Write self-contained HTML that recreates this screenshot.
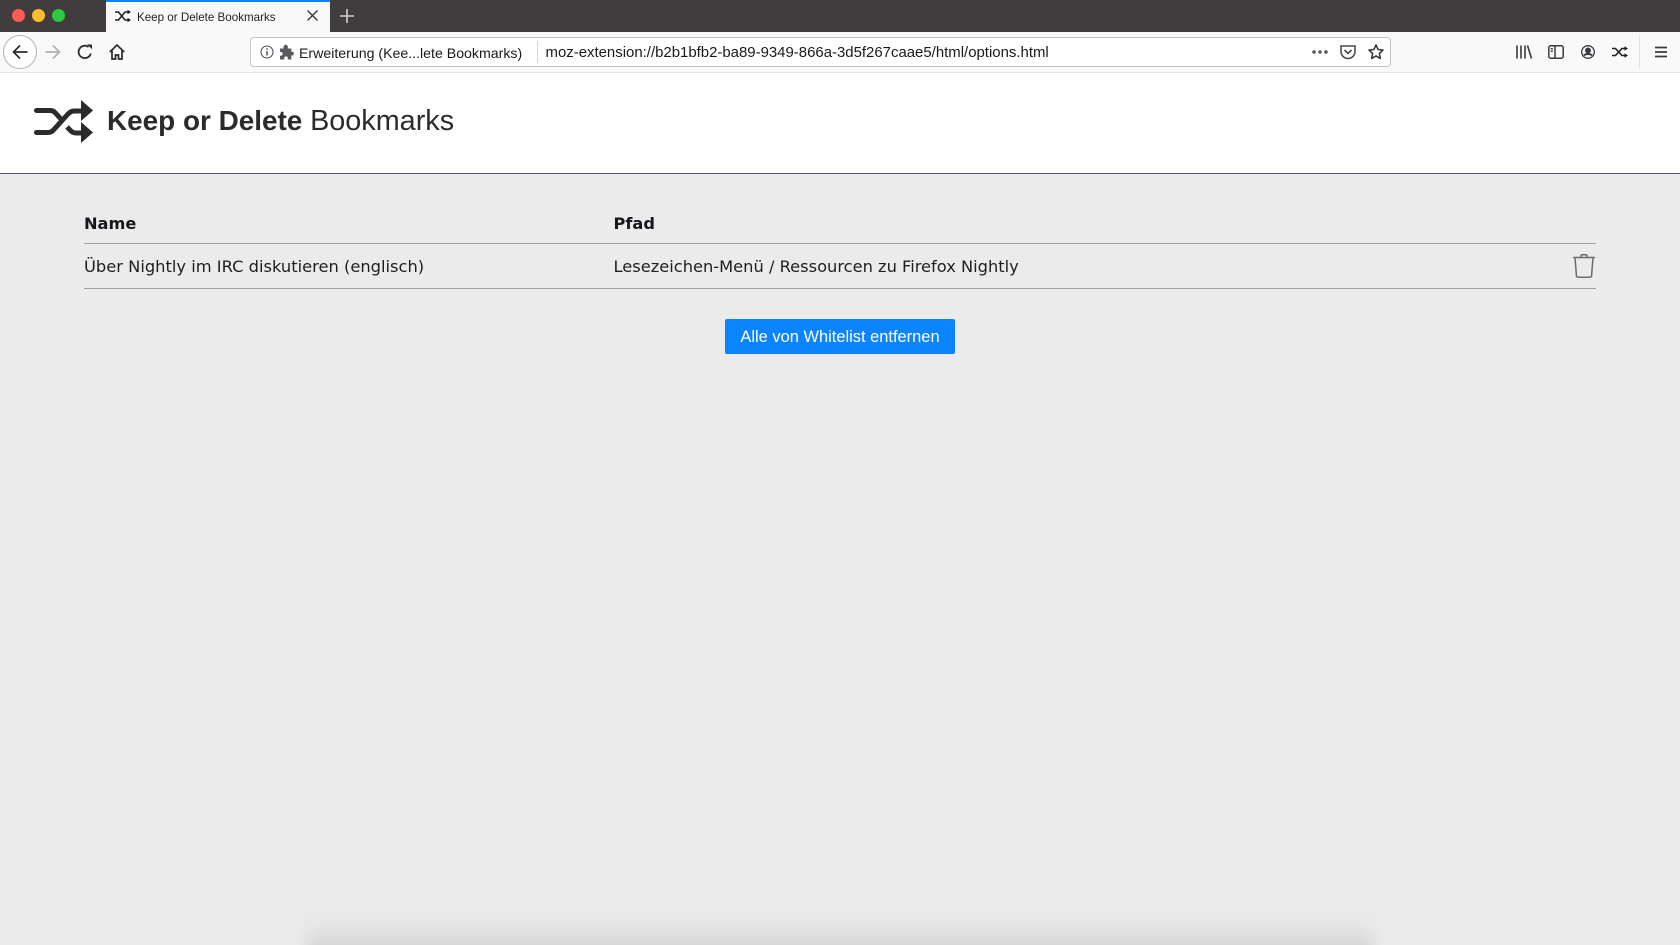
<!DOCTYPE html>
<html lang="de"><head><meta charset="utf-8"><title>Keep or Delete Bookmarks</title>
<style>
html,body{margin:0;padding:0;width:1680px;height:945px;overflow:hidden;background:#ebebeb;font-family:"Liberation Sans",sans-serif}
.a{position:absolute;white-space:nowrap}
svg.a{overflow:visible}
</style></head><body>
<div class="a" style="left:0;top:0;width:1680px;height:32px;background:#413c3e"></div>
<div class="a" style="left:12px;top:9px;width:13px;height:13px;border-radius:50%;background:#fc5b57"></div>
<div class="a" style="left:32px;top:9px;width:13px;height:13px;border-radius:50%;background:#fdbc2e"></div>
<div class="a" style="left:52px;top:9px;width:13px;height:13px;border-radius:50%;background:#2bc840"></div>
<div class="a" style="left:106px;top:0;width:224px;height:32px;background:#f9f9fa;box-sizing:border-box;border-top:2px solid #0a84ff"></div>
<svg class="a" style="left:115px;top:9px" width="16" height="14" viewBox="0 0 16 14" fill="none" stroke="#222" stroke-width="1.6"><path d="M0 3h3.5L10 11h3M0 11h3.5L10 3h3"/><path d="M12.5 0.8v4.4L16 3zM12.500 8.800v4.400L16 11z" fill="#222" stroke="none"/></svg>
<div class="a" style="left:137px;top:9.500px;font-size:11.600px;line-height:15px;color:#222">Keep or Delete Bookmarks</div>
<svg class="a" style="left:307px;top:10px" width="11" height="11" stroke="#333" stroke-width="1.3"><path d="M.5.5l10 10M10.500.5l-10 10"/></svg>
<svg class="a" style="left:340px;top:9px" width="14" height="14" stroke="#d4d2d3" stroke-width="1.6"><path d="M7 0v14M0 7h14"/></svg>

<div class="a" style="left:0;top:32px;width:1680px;height:40px;background:#f9f9fa;border-bottom:1px solid #e1e1e2;box-sizing:content-box"></div>
<div class="a" style="left:3px;top:35px;width:34px;height:34px;box-sizing:border-box;border:1px solid #b1b1b3;border-radius:50%;background:#fff"></div>
<svg class="a" style="left:12px;top:44px" width="16" height="16" fill="none" stroke="#2a2a2e" stroke-width="1.7"><path d="M15.500 8H1.500M8 1.500L1.500 8L8 14.500"/></svg>
<svg class="a" style="left:45px;top:44px" width="16" height="16" fill="none" stroke="#b0b0b2" stroke-width="1.7"><path d="M.5 8h14M8 1.500L14.500 8L8 14.500"/></svg>
<svg class="a" style="left:77px;top:44px" width="16" height="16" fill="none" stroke="#2a2a2e" stroke-width="1.8"><path d="M13.800 9.500A6.200 6.200 0 1 1 11.600 3"/><path d="M10.200 .3l4.800.3v4.600z" fill="#2a2a2e" stroke="none"/></svg>
<svg class="a" style="left:109px;top:44px" width="16" height="16" fill="none" stroke="#2a2a2e" stroke-width="1.7"><path d="M.8 8L8 1l7.200 7M3 6.500V15h3.500v-4h3v4H13V6.500"/></svg>

<div class="a" style="left:250px;top:37px;width:1141px;height:30px;box-sizing:border-box;background:#fff;border:1px solid #c4c4c6;border-radius:4px"></div>
<svg class="a" style="left:260px;top:45px" width="14" height="14" fill="none" stroke="#4a4a4f"><circle cx="7" cy="7" r="6"/><path d="M7 6v4.500M7 3.200v1.500" stroke-width="1.400"/></svg>
<svg class="a" style="left:279px;top:44px" width="16" height="16" fill="#5b5b5f"><path d="M1 4.500h3.500V3a2.200 2.200 0 0 1 4.400 0v1.500h3.400v3.200H13.500a2 2 0 0 1 0 3.800h-1.200V15.500H8.800v-1.300a1.800 1.800 0 0 0-3.600 0v1.300H1v-3.700H2.300a2 2 0 0 0 0-3.800H1z"/></svg>
<div class="a" style="left:299px;top:44.500px;font-size:14.150px;line-height:17px;color:#1a1a1a">Erweiterung (Kee...lete Bookmarks)</div>
<div class="a" style="left:537px;top:41px;width:1px;height:22px;background:#d7d7d9"></div>
<div class="a" style="left:545.500px;top:44px;font-size:14.950px;line-height:17px;color:#1a1a1a">moz-extension://b2b1bfb2-ba89-9349-866a-3d5f267caae5/html/options.html</div>
<svg class="a" style="left:1312px;top:50px" width="16" height="4" fill="#55555a"><circle cx="2" cy="2" r="1.800"/><circle cx="8" cy="2" r="1.800"/><circle cx="14" cy="2" r="1.800"/></svg>
<svg class="a" style="left:1340px;top:45px" width="16" height="14" fill="none" stroke="#4a4a4f" stroke-width="1.6"><path d="M1 1h14v5.500a7 7 0 0 1-14 0z"/><path d="M4.500 5l3.500 3.500L11.500 5"/></svg>
<svg class="a" style="left:1368px;top:44px" width="16" height="16" fill="none" stroke="#3a3a3f" stroke-width="1.600" stroke-linejoin="round"><path d="M8 1l2.100 4.500 4.900.6-3.600 3.400.9 4.900L8 12l-4.300 2.400.9-4.900L1 6.100l4.900-.6z"/></svg>

<svg class="a" style="left:1516px;top:44px" width="16" height="16" fill="none" stroke="#3a3a3f" stroke-width="1.6"><path d="M1 1.500v13M5 1.500v13M9 1.500v13M11.500 1.500l4 13"/></svg>
<svg class="a" style="left:1548px;top:45px" width="16" height="14" fill="none" stroke="#3a3a3f" stroke-width="1.500"><rect x=".8" y=".8" width="14.400" height="12.400" rx="2"/><path d="M7 1v12M2.800 3.800h2M2.800 6.300h2"/></svg>
<svg class="a" style="left:1581px;top:45px" width="14" height="14" fill="none" stroke="#3a3a3f" stroke-width="1.300"><circle cx="7" cy="7" r="6.300"/><circle cx="7" cy="5.500" r="2.300" fill="#3a3a3f"/><path d="M3 10.500c1.500-2 6.500-2 8 0" stroke-width="2"/></svg>
<svg class="a" style="left:1612px;top:46px" width="16" height="12" viewBox="0 0 16 12" fill="none" stroke="#222" stroke-width="1.600"><path d="M0 2.500h3.500L10 9.500h3M0 9.500h3.500L10 2.500h3"/><path d="M12.500 .3v4.400L16 2.500zM12.500 7.300v4.400L16 9.500z" fill="#222" stroke="none"/></svg>
<div class="a" style="left:1639px;top:35px;width:1px;height:33px;background:#e1e1e2"></div>
<svg class="a" style="left:1655px;top:46px" width="12" height="12" stroke="#3a3a3f" stroke-width="1.700"><path d="M0 1.500h12M0 6h12M0 10.500h12"/></svg>

<div class="a" style="left:0;top:73px;width:1680px;height:101px;background:#fff;border-bottom:1px solid #4f5872;box-sizing:border-box"></div>
<svg class="a" style="left:33px;top:100px" width="60" height="43" viewBox="0 0 60 43" fill="none" stroke="#2b2b2b" stroke-width="5" stroke-linecap="round" stroke-linejoin="round"><path d="M3.500 10.500H17q3 0 5 2L27 18"/><path d="M3.500 32.500H15q3 0 5-2L35 14q3-3 6-3H49"/><path d="M34 27l4 4q2 2 5 2H49" stroke-linecap="butt"/><path d="M48 0v21l12-10.500zM48 22v21l12-10.500z" fill="#2b2b2b" stroke="none"/></svg>
<div class="a" style="left:107px;top:103px;line-height:36px;color:#2b2b2b;font-size:27.900px"><b>Keep or Delete</b> <span style="font-size:28.800px">Bookmarks</span></div>

<div class="a" style="left:84px;top:214px;font:bold 16.200px/20px 'DejaVu Sans',sans-serif;color:#14181c">Name</div>
<div class="a" style="left:613.500px;top:214px;font:bold 16.200px/20px 'DejaVu Sans',sans-serif;color:#14181c">Pfad</div>
<div class="a" style="left:84px;top:243px;width:1512px;height:1px;background:#a2a2a2"></div>
<div class="a" style="left:84px;top:257px;font:16.300px/20px 'DejaVu Sans',sans-serif;color:#1c1f22">Über Nightly im IRC diskutieren (englisch)</div>
<div class="a" style="left:613.500px;top:257px;font:16.260px/20px 'DejaVu Sans',sans-serif;color:#1c1f22">Lesezeichen-Menü / Ressourcen zu Firefox Nightly</div>
<svg class="a" style="left:1573px;top:254px" width="22" height="24" fill="none" stroke="#6a6a6a" stroke-width="1.500"><path d="M0 3.500h22M8 3.500V2q0-1.200 1.200-1.200h3.600Q14 .8 14 2v1.500M2 3.500l1.400 18q.1 1.700 1.800 1.700h11.600q1.700 0 1.800-1.700L20 3.500"/></svg>
<div class="a" style="left:84px;top:288px;width:1512px;height:1px;background:#a2a2a2"></div>

<div class="a" style="left:725px;top:319px;width:230px;height:35px;background:#0a84ff;border-radius:2px;color:#fff;font-size:16.450px;line-height:37px;text-align:center">Alle von Whitelist entfernen</div>

<div class="a" style="left:296px;top:905px;width:1088px;height:40px;background:linear-gradient(to bottom,rgba(216,216,216,0),rgba(216,216,216,.25) 50%,#d7d7d7);-webkit-mask-image:linear-gradient(to right,transparent,#000 22px,#000 1066px,transparent)"></div>
</body></html>
